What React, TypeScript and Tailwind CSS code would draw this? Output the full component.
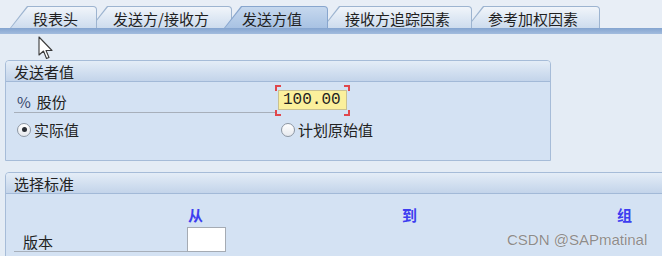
import React from 'react';

type Tab = { label: string; outer: string; inner: string };

const tabs: Tab[] = [
  {
    label: '段表头',
    outer: 'w-[87px] ml-[10px] z-[5] bg-[#9db4d0]',
    inner: 'pl-[22px] from-[#f1f5fa] to-[#cddcee]',
  },
  {
    label: '发送方/接收方',
    outer: 'w-[142px] -ml-[7px] z-[4] bg-[#9db4d0]',
    inner: 'pl-[22px] from-[#f1f5fa] to-[#cddcee]',
  },
  {
    label: '发送方值',
    outer: 'w-[104px] -ml-[8px] z-[6] bg-[#88a6ce]',
    inner: 'pl-[17px] from-[#c6d8ee] to-[#a8c2e3]',
  },
  {
    label: '接收方追踪因素',
    outer: 'w-[150px] -ml-[6px] z-[3] bg-[#9db4d0]',
    inner: 'pl-[22px] from-[#f1f5fa] to-[#cddcee]',
  },
  {
    label: '参考加权因素',
    outer: 'w-[134px] -ml-[6px] z-[2] bg-[#9db4d0]',
    inner: 'pl-[21px] from-[#f1f5fa] to-[#cddcee]',
  },
];

const Radio: React.FC<{ checked?: boolean; label: string }> = ({ checked, label }) => (
  <div className="flex items-center h-[15px]">
    <span className="w-[14px] h-[14px] rounded-full border border-[#8d96a2] bg-linear-to-b from-[#ffffff] to-[#e6e9ee] flex items-center justify-center">
      {checked && <span className="w-[5px] h-[5px] rounded-full bg-[#2b2f36]" />}
    </span>
    <span className="ml-[3px] text-[15px] leading-[15px] text-[#222]">{label}</span>
  </div>
);

const GroupHeader: React.FC<{ title: string }> = ({ title }) => (
  <div className="h-[21px] bg-linear-to-b from-[#e4edf7] to-[#c3d4ea] border-b border-[#a2b9d7] pl-[8px] text-[15px] leading-[21px] text-[#222]">
    {title}
  </div>
);

const App: React.FC = () => {
  return (
    <div className="relative w-[662px] h-[256px] overflow-hidden bg-[#e4ecf5] font-['Noto_Sans_CJK_SC',sans-serif]">
      {/* Tab strip */}
      <div className="flex items-end h-[28px] pt-[6px] bg-[#e8eef6]">
        {tabs.map((t) => (
          <div
            key={t.label}
            className={`relative shrink-0 h-[22px] p-[1px] pb-0 rounded-tr-[4px] [clip-path:polygon(17px_0,100%_0,100%_100%,0_100%)] ${t.outer}`}
          >
            <div
              className={`h-full rounded-tr-[3px] bg-linear-to-b flex items-center pt-[2px] text-[15px] leading-[15px] text-[#1f1f1f] whitespace-nowrap [clip-path:polygon(17px_0,100%_0,100%_100%,0_100%)] ${t.inner}`}
            >
              {t.label}
            </div>
          </div>
        ))}
      </div>
      <div className="h-[6px] bg-linear-to-b from-[#84a4cf] to-[#a2bcde]" />

      {/* 发送者值 */}
      <div className="ml-[5px] mt-[26px] w-[546px] border border-[#a6bcd8] rounded-t-[4px] overflow-hidden bg-[#d4e2f3]">
        <GroupHeader title="发送者值" />
        <div className="h-[78px] pt-[3px]">
          <div className="flex h-[31px]">
            <div className="ml-[8px] w-[261px] h-[28px] border-b border-[#a7afba] flex items-end pl-[3px] pb-[3px] text-[15px] leading-[15px] text-[#222]">
              <span className="text-[#34456a]">%</span>
              <span className="ml-[6px]">股份</span>
            </div>
            <div className="relative w-[75px] h-[31px]">
              <span className="absolute left-0 top-0 w-[6px] h-[6px] border-l-2 border-t-2 border-[#e0474c]" />
              <span className="absolute right-0 top-0 w-[6px] h-[6px] border-r-2 border-t-2 border-[#e0474c]" />
              <span className="absolute left-0 bottom-0 w-[6px] h-[6px] border-l-2 border-b-2 border-[#e0474c]" />
              <span className="absolute right-0 bottom-0 w-[6px] h-[6px] border-r-2 border-b-2 border-[#e0474c]" />
              <div className="ml-[3px] mt-[5px] w-[69px] h-[20px] bg-[#fbf09c] border border-[#c9c191] flex items-center pl-[4px] font-['Liberation_Mono',monospace] text-[16px] leading-[16px] text-[#222]">
                100.00
              </div>
            </div>
          </div>
          <div className="flex mt-[6px] ml-[11px]">
            <div className="w-[264px]">
              <Radio checked label="实际值" />
            </div>
            <Radio label="计划原始值" />
          </div>
        </div>
      </div>

      {/* 选择标准 */}
      <div className="ml-[5px] mt-[11px] w-[700px] border border-[#a6bcd8] rounded-t-[4px] overflow-hidden bg-[#d4e2f3]">
        <GroupHeader title="选择标准" />
        <div className="h-[80px]">
          <div className="flex mt-[13px] h-[15px] text-[15px] leading-[15px] font-bold text-[#3d3df0]">
            <span className="ml-[182px]">从</span>
            <span className="ml-[199px]">到</span>
            <span className="ml-[200px]">组</span>
          </div>
          <div className="flex mt-[5px] h-[25px]">
            <div className="ml-[8px] w-[173px] h-[25px] border-b border-[#a7afba] flex items-end pl-[9px] pb-[2px] text-[15px] leading-[15px] text-[#222]">
              版本
            </div>
            <div className="w-[39px] h-[25px] bg-white border border-[#a5abb3]" />
          </div>
        </div>
      </div>

      {/* mouse pointer */}
      <svg className="absolute left-[38px] top-[36px]" width="16" height="25" viewBox="0 0 16 25">
        <path
          d="M1 1 L1 19 L5.5 15 L8.5 22.5 L11 21.5 L8 14.5 L14 14.5 Z"
          fill="#ffffff"
          stroke="#3a3a3a"
          strokeWidth="1.1"
          strokeLinejoin="round"
        />
      </svg>

      {/* watermark */}
      <div className="absolute left-[507px] top-[231px] font-['Liberation_Sans',sans-serif] text-[15px] leading-[18px] text-[#8c8c8c] [text-shadow:0_0_1px_#ffffff]">
        CSDN @SAPmatinal
      </div>
    </div>
  );
};

export default App;
